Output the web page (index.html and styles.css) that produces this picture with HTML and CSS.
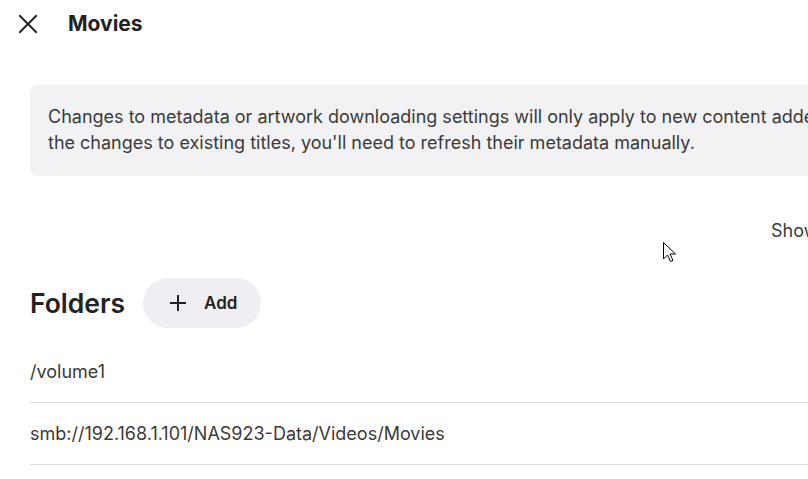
FILE: index.html
```html
<!DOCTYPE html>
<html>
<head>
<meta charset="utf-8">
<link rel="stylesheet" href="styles.css">
</head>
<body>
<div class="page">
  <header class="topbar">
    <button class="close" aria-label="Close">
      <svg width="20" height="20" viewBox="0 0 20 20"><path d="M2 2 L18 18 M18 2 L2 18" stroke="#222" stroke-width="2" fill="none" stroke-linecap="square"/></svg>
    </button>
    <h1 class="title">Movies</h1>
  </header>
  <main class="content">
    <div class="notice">Changes to metadata or artwork downloading settings will only apply to new content added to the library. To apply the changes to existing titles, you'll need to refresh their metadata manually.</div>
    <div class="advanced"><span class="adv-link">Show advanced settings</span></div>
    <div class="folders-head">
      <h2 class="folders-title">Folders</h2>
      <button class="add-btn">
        <svg width="18" height="18" viewBox="0 0 18 18"><path d="M9 1 V17 M1 9 H17" stroke="#222" stroke-width="2" fill="none"/></svg>
        <span>Add</span>
      </button>
    </div>
    <ul class="folder-list">
      <li class="folder">/volume1</li>
      <li class="folder">smb://192.168.1.101/NAS923-Data/Videos/Movies</li>
    </ul>
  </main>
  <svg class="cursor" width="13" height="21" viewBox="0 0 13 21"><path d="M0.5 0.5 V17 L4.5 13 L7.5 19.5 L10 18.5 L7 12 H12.5 Z" fill="#fff" stroke="#000" stroke-width="1" stroke-linejoin="round"/></svg>
</div>
</body>
</html>
```
FILE: styles.css
```css
html, body {
  margin: 0;
  padding: 0;
  background: #fff;
  overflow: hidden;
}
body {
  font-family: Inter, "Noto Sans", sans-serif;
  color: #333;
  width: 808px;
  height: 479px;
}
.page {
  position: relative;
  width: 1100px;
}
.topbar {
  display: flex;
  align-items: center;
  height: 47px;
  padding-left: 18px;
}
.close {
  border: 0;
  background: none;
  padding: 0;
  width: 20px;
  height: 20px;
  display: flex;
  margin-top: 1px;
}
.title {
  margin: 0 0 0 30px;
  font-size: 21px;
  font-weight: 700;
  color: #222;
}
.content {
  padding: 38px 30px 0 30px;
}
.notice {
  background: #f2f2f4;
  border-radius: 8px;
  padding: 19px 18px 20px;
  font-size: 18px;
  line-height: 26px;
  color: #3a3a3a;
  width: 1020px;
  box-sizing: border-box;
}
.advanced {
  width: 1000px;
  margin-top: 43px;
  height: 24px;
  font-size: 18px;
  line-height: 24px;
  padding-left: 741px;
  box-sizing: border-box;
  color: #3a3a3a;
}
.folders-head {
  display: flex;
  align-items: center;
  gap: 18px;
  margin-top: 35px;
}
.folders-title {
  margin: 0;
  font-size: 26.5px;
  font-weight: 600;
  color: #222;
}
.add-btn {
  display: flex;
  align-items: center;
  gap: 17px;
  height: 50px;
  width: 118px;
  padding: 0 0 0 26px;
  box-sizing: border-box;
  border: 0;
  border-radius: 25px;
  background: #efeef3;
  font-family: inherit;
  font-size: 17px;
  font-weight: 600;
  color: #222;
}
.folder-list {
  list-style: none;
  margin: 13px 0 0 0;
  padding: 0;
  width: 1000px;
}
.folder {
  height: 61px;
  line-height: 62px;
  font-size: 18px;
  color: #3a3a3a;
  border-bottom: 1px solid #dcdcdc;
}
.cursor {
  position: absolute;
  left: 663px;
  top: 242px;
}
```
